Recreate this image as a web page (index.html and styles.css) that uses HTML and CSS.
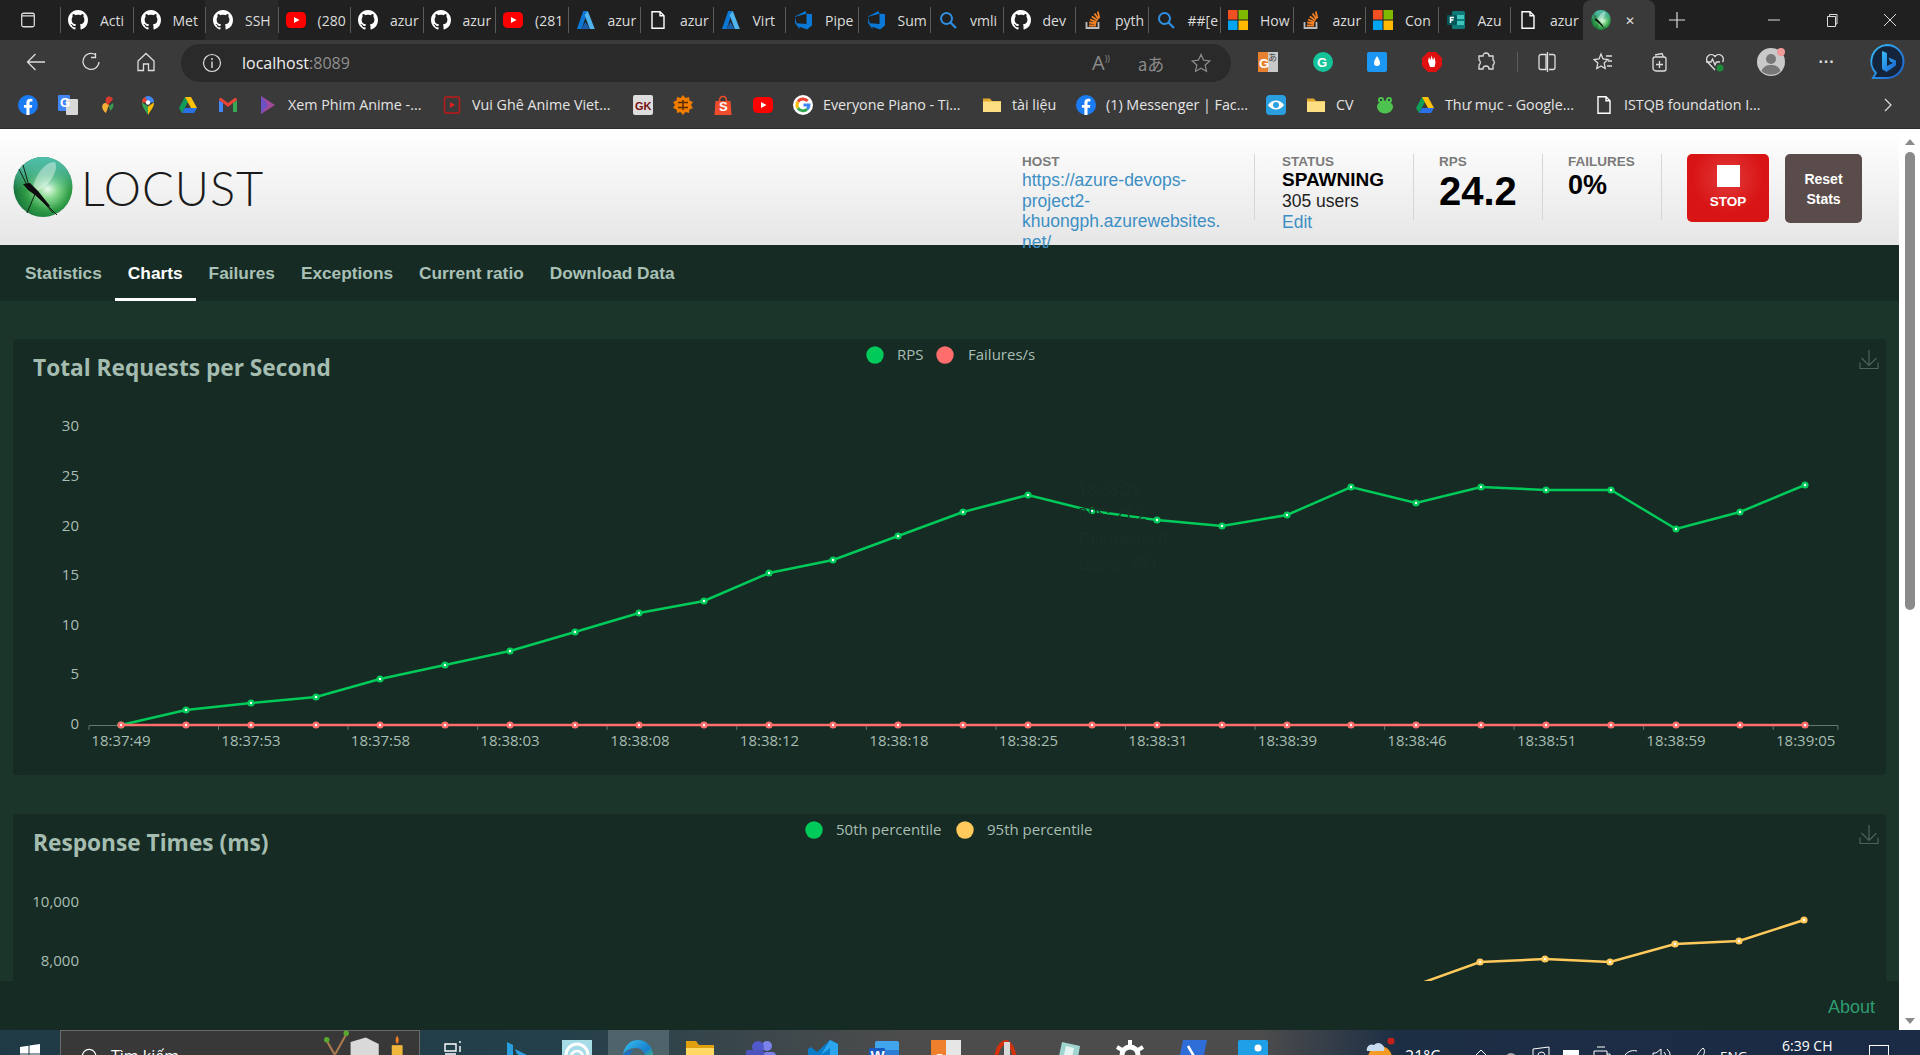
FILE: index.html
```html
<!DOCTYPE html>
<html lang="en">
<head>
    <meta charset="UTF-8">
    <meta name="viewport" content="width=device-width, initial-scale=1.0">
    <title>Locust</title>
    <link rel="stylesheet" href="styles.css">
</head>
<body>
    <!-- shared icons -->
    <svg class="sprite" xmlns="http://www.w3.org/2000/svg">
        <defs>
            <radialGradient id="orb" cx="58%" cy="52%" r="58%">
                <stop offset="0" stop-color="#f4fff4"/>
                <stop offset="0.3" stop-color="#86d88f"/>
                <stop offset="0.65" stop-color="#2f9c46"/>
                <stop offset="1" stop-color="#17713c"/>
            </radialGradient>
            <linearGradient id="orbtop" x1="0" y1="0" x2="0" y2="1">
                <stop offset="0" stop-color="#4fc0ad"/>
                <stop offset="0.22" stop-color="#4fb8a0" stop-opacity=".85"/>
                <stop offset="0.55" stop-color="#4fb8a0" stop-opacity="0"/>
            </linearGradient>
            <linearGradient id="edge" x1="0" y1="0" x2="1" y2="1">
                <stop offset="0" stop-color="#35c1f1"/>
                <stop offset="0.6" stop-color="#1b80cf"/>
                <stop offset="1" stop-color="#56d25a"/>
            </linearGradient>
            <linearGradient id="bingg" x1="0" y1="0" x2="1" y2="1">
                <stop offset="0" stop-color="#37bdf8"/>
                <stop offset="1" stop-color="#1a5fd0"/>
            </linearGradient>
        </defs>
        <symbol id="i-github" viewBox="0 0 16 16"><path fill="#fff" d="M8 0C3.58 0 0 3.58 0 8c0 3.54 2.29 6.53 5.47 7.59.4.07.55-.17.55-.38 0-.19-.01-.82-.01-1.49-2.01.37-2.53-.49-2.69-.94-.09-.23-.48-.94-.82-1.13-.28-.15-.68-.52-.01-.53.63-.01 1.08.58 1.23.82.72 1.21 1.87.87 2.33.66.07-.52.28-.87.51-1.07-1.78-.2-3.64-.89-3.64-3.95 0-.87.31-1.59.82-2.15-.08-.2-.36-1.02.08-2.12 0 0 .67-.21 2.2.82.64-.18 1.32-.27 2-.27.68 0 1.36.09 2 .27 1.53-1.04 2.2-.82 2.2-.82.44 1.1.16 1.92.08 2.12.51.56.82 1.27.82 2.15 0 3.07-1.87 3.75-3.65 3.95.29.25.54.73.54 1.48 0 1.07-.01 1.93-.01 2.2 0 .21.15.46.55.38A8.013 8.013 0 0016 8c0-4.42-3.58-8-8-8z"/></symbol>
        <symbol id="i-yt" viewBox="0 0 20 20"><rect y="2" width="20" height="16" rx="4.5" fill="#f00"/><path fill="#fff" d="M8 7l5.5 3L8 13z"/></symbol>
        <symbol id="i-azure" viewBox="0 0 20 20"><path fill="#0a78d4" d="M7.2 1h4.6L5.6 19H1z"/><path fill="#50b4ee" d="M11.8 1l7 18h-5L8.6 5z"/><path fill="#1a5fa8" d="M9.6 12l4.2 7H5.6l2.2-4.4z"/></symbol>
        <symbol id="i-doc" viewBox="0 0 20 20"><path fill="none" stroke="#fff" stroke-width="1.4" d="M4 1.7h8l4 4v12.6H4zM12 1.7v4h4"/></symbol>
        <symbol id="i-devops" viewBox="0 0 20 20"><path fill="#0a78d4" d="M19 4v11.5L14 19.5l-7.5-2.8V19L2 13l11.5.9V3.8zM2 7l1.6 6L2 13V6.5L12.5 1l1 2.8L5 6z"/></symbol>
        <symbol id="i-search" viewBox="0 0 20 20"><circle cx="8.5" cy="8.5" r="5.5" fill="none" stroke="#2f8fe0" stroke-width="2"/><path stroke="#2f8fe0" stroke-width="2.2" d="M12.5 12.5L18 18"/></symbol>
        <symbol id="i-so" viewBox="0 0 20 20"><path fill="none" stroke="#bcbbbb" stroke-width="1.8" d="M3.5 12v6h12v-6"/><path fill="none" stroke="#f48024" stroke-width="1.8" d="M6 15.5h7M6.2 12.5l7 1M7 9.5l6.6 2.6M8.8 6.4l5.8 4M11.5 3.5l4 5.6M14.8 1.5l1.5 6.7"/></symbol>
        <symbol id="i-ms" viewBox="0 0 20 20"><path fill="#f25022" d="M0 0h9.5v9.5H0z"/><path fill="#7fba00" d="M10.5 0H20v9.5h-9.5z"/><path fill="#00a4ef" d="M0 10.5h9.5V20H0z"/><path fill="#ffb900" d="M10.5 10.5H20V20h-9.5z"/></symbol>
        <symbol id="i-forms" viewBox="0 0 20 20"><rect x="6" y="1" width="13" height="18" rx="1.5" fill="#0f7b78"/><rect x="11" y="5" width="7" height="4" fill="#3fc6bd"/><rect x="11" y="11" width="7" height="4" fill="#3fc6bd"/><rect x="1" y="5" width="10" height="10" rx="1" fill="#05585a"/><path fill="none" stroke="#fff" stroke-width="1.5" d="M4.5 13V7.5h3.5M4.5 10h3"/></symbol>
        <symbol id="i-folder" viewBox="0 0 20 20"><path fill="#e0a92e" d="M1 3.5h7l2 2.5h9v11H1z"/><path fill="#fbdf82" d="M1 6.5h18V17H1z"/></symbol>
        <symbol id="i-fb" viewBox="0 0 20 20"><circle cx="10" cy="10" r="10" fill="#1b7bf2"/><path fill="#fff" d="M13.8 12.8l.5-2.9h-2.8V8c0-.8.4-1.5 1.6-1.5h1.3V4c-.7-.1-1.5-.2-2.2-.2-2.3 0-3.8 1.4-3.8 3.9v2.2H5.9v2.9h2.5V20h3.1v-7.2z"/></symbol>
        <symbol id="i-drive" viewBox="0 0 20 20"><path fill="#0f9d58" d="M7 2L1 13l3 5 6-11z"/><path fill="#ffc107" d="M7 2h6l6 11h-6z"/><path fill="#2a71e8" d="M19 13l-3 5H4l3-5z"/></symbol>
        <symbol id="i-g" viewBox="0 0 20 20"><circle cx="10" cy="10" r="10" fill="#fff"/><path fill="none" stroke-width="3" stroke="#ea4335" d="M14.6 6A6 6 0 0 0 5 6.8"/><path fill="none" stroke-width="3" stroke="#fbbc05" d="M5 6.8a6 6 0 0 0 0 6.4"/><path fill="none" stroke-width="3" stroke="#34a853" d="M5 13.2A6 6 0 0 0 14.3 14"/><path fill="none" stroke-width="3" stroke="#4285f4" d="M14.3 14A6 6 0 0 0 16 10h-5.5"/></symbol>
        <symbol id="i-orb" viewBox="0 0 60 60">
            <ellipse cx="30" cy="30" rx="29.5" ry="30" fill="url(#orb)"/>
            <ellipse cx="30" cy="30" rx="29.5" ry="30" fill="url(#orbtop)"/>
            <path fill="#fff" fill-opacity=".4" d="M20 30C24 14 34 4 42 5c4 7-4 23-18 29z"/>
            <path fill="#0e0e0e" d="M10 27l7-1 8 8 12 15-2 1-13-12-7-5z"/>
            <path fill="none" stroke="#0e0e0e" stroke-width=".9" d="M16 29L10 8M14 28L6 12M22 37L14 56M28 42L40 56M30 44L44 58"/>
        </symbol>
        <symbol id="i-down" viewBox="0 0 20 20"><path fill="none" stroke="#4f6259" stroke-width="1.2" d="M10 1v15.5M2.5 9l7.5 7.5L17.5 9M1 13.5v6h18v-6"/></symbol>
    </svg>

    <!-- browser tabs -->
    <div class="tabstrip">
        <div class="sidetab"><svg class="ic18" viewBox="0 0 20 20"><path fill="none" stroke="#ddd" stroke-width="1.4" d="M5 2.5h10a2 2 0 0 1 2 2v11a2 2 0 0 1-2 2H5a2 2 0 0 1-2-2v-11a2 2 0 0 1 2-2zM3 5.5h14"/></svg></div>
        <div class="tab"><svg class="fav"><use href="#i-github"/></svg><span>Acti</span></div>
        <div class="tab"><svg class="fav"><use href="#i-github"/></svg><span>Met</span></div>
        <div class="tab tab-hover"><svg class="fav"><use href="#i-github"/></svg><span>SSH</span></div>
        <div class="tab"><svg class="fav"><use href="#i-yt"/></svg><span>(280</span></div>
        <div class="tab"><svg class="fav"><use href="#i-github"/></svg><span>azur</span></div>
        <div class="tab"><svg class="fav"><use href="#i-github"/></svg><span>azur</span></div>
        <div class="tab"><svg class="fav"><use href="#i-yt"/></svg><span>(281</span></div>
        <div class="tab"><svg class="fav"><use href="#i-azure"/></svg><span>azur</span></div>
        <div class="tab"><svg class="fav"><use href="#i-doc"/></svg><span>azur</span></div>
        <div class="tab"><svg class="fav"><use href="#i-azure"/></svg><span>Virt</span></div>
        <div class="tab"><svg class="fav"><use href="#i-devops"/></svg><span>Pipe</span></div>
        <div class="tab"><svg class="fav"><use href="#i-devops"/></svg><span>Sum</span></div>
        <div class="tab"><svg class="fav"><use href="#i-search"/></svg><span>vmli</span></div>
        <div class="tab"><svg class="fav"><use href="#i-github"/></svg><span>dev</span></div>
        <div class="tab"><svg class="fav"><use href="#i-so"/></svg><span>pyth</span></div>
        <div class="tab"><svg class="fav"><use href="#i-search"/></svg><span>##[e</span></div>
        <div class="tab"><svg class="fav"><use href="#i-ms"/></svg><span>How</span></div>
        <div class="tab"><svg class="fav"><use href="#i-so"/></svg><span>azur</span></div>
        <div class="tab"><svg class="fav"><use href="#i-ms"/></svg><span>Con</span></div>
        <div class="tab"><svg class="fav"><use href="#i-forms"/></svg><span>Azu</span></div>
        <div class="tab"><svg class="fav"><use href="#i-doc"/></svg><span>azur</span></div>
        <div class="tab tab-active"><svg class="fav"><use href="#i-orb"/></svg><span class="tab-x">✕</span></div>
        <div class="newtab">
            <svg class="ic18" viewBox="0 0 20 20"><path stroke="#ddd" stroke-width="1.3" d="M10 1v18M1 10h18"/></svg>
        </div>
        <div class="winctl">
            <svg class="ic14" viewBox="0 0 14 14"><path stroke="#ddd" d="M1 7h12"/></svg>
            <svg class="ic14" viewBox="0 0 14 14"><path fill="none" stroke="#ddd" d="M2.5 3.500h8v10h-8zM4.500 3.500v-2h7.500v9.500h-1.500"/></svg>
            <svg class="ic14" viewBox="0 0 14 14"><path stroke="#ddd" d="M1 1l12 12M13 1L1 13"/></svg>
        </div>
    </div>

    <!-- browser toolbar -->
    <div class="toolbar">
        <div class="tool"><svg class="ic20" viewBox="0 0 20 20"><path fill="none" stroke="#ddd" stroke-width="1.3" d="M19 10H1.500M9.500 2L1.500 10l8 8"/></svg></div>
        <div class="tool"><svg class="ic20" viewBox="0 0 20 20"><path fill="none" stroke="#ddd" stroke-width="1.3" d="M14.500 2.800A8 8 0 1 0 18 10M14.500 1v4.500H10"/></svg></div>
        <div class="tool"><svg class="ic20" viewBox="0 0 20 20"><path fill="none" stroke="#ddd" stroke-width="1.3" d="M2 9l8-7.500L18 9v9.500h-5.500V12h-5v6.500H2z"/></svg></div>
        <div class="address">
            <svg class="ic20 addr-info" viewBox="0 0 20 20"><circle cx="10" cy="10" r="8.5" fill="none" stroke="#ddd" stroke-width="1.2"/><path stroke="#ddd" stroke-width="1.4" d="M10 8.500V15M10 5v2"/></svg>
            <span class="addr-host">localhost</span><span class="addr-port">:8089</span>
            <div class="addr-actions">
                <span class="addr-btn addr-read">A<sup>))</sup></span>
                <span class="addr-btn addr-trans">aあ</span>
                <span class="addr-btn"><svg class="ic20" viewBox="0 0 20 20"><path fill="none" stroke="#8a8a8a" stroke-width="1.3" d="M10 1.500l2.600 5.700 6.200.7-4.600 4.200 1.300 6.100L10 15.200l-5.500 3 1.300-6.100L1.200 7.900l6.200-.7z"/></svg></span>
            </div>
        </div>
        <div class="ext ext-first"><svg class="ic20" viewBox="0 0 20 20"><rect width="11" height="20" fill="#e8812f"/><rect x="10" width="10" height="20" fill="#c9c9c9"/><text class="ext-g" x="1" y="16">G</text><text class="ext-kana" x="10" y="9">あ</text></svg></div>
        <div class="ext"><svg class="ic20" viewBox="0 0 20 20"><circle cx="10" cy="10" r="10" fill="#15c39a"/><text class="ext-g" x="4" y="15">G</text></svg></div>
        <div class="ext"><svg class="ic20" viewBox="0 0 20 20"><rect width="20" height="20" rx="2" fill="#1c96f3"/><path fill="#fff" d="M10 4c2 3.500 3 5 3 7a3 3 0 0 1-6 0c0-2 1-3.500 3-7z"/></svg></div>
        <div class="ext"><svg class="ic20" viewBox="0 0 20 20"><path fill="#e01010" d="M6 0h8l6 6v8l-6 6H6l-6-6V6z"/><path fill="#fff" d="M6 9l1-4 1.500 3L9.500 3.500 11 8l1.500-3 1 5.500-1 4.500H8z"/></svg></div>
        <div class="ext"><svg class="ic20" viewBox="0 0 20 20"><path fill="none" stroke="#ddd" stroke-width="1.3" d="M7 4a3 3 0 0 1 6 0h4v4a3 3 0 0 1 0 5v4h-4a3 3 0 0 0-6 0H3v-4a3 3 0 0 0 0-5V4z"/></svg></div>
        <div class="tool-sep"></div>
        <div class="hub"><svg class="ic20" viewBox="0 0 20 20"><path fill="none" stroke="#ddd" stroke-width="1.3" d="M9 2.500H4a2 2 0 0 0-2 2v11a2 2 0 0 0 2 2h5zM12 2.500h4a2 2 0 0 1 2 2v11a2 2 0 0 1-2 2h-4M10.500 0v20"/></svg></div>
        <div class="hub"><svg class="ic20" viewBox="0 0 20 20"><path fill="none" stroke="#ddd" stroke-width="1.3" d="M8 2l2 5 5 .5-3.800 3.500 1 5.500L8 14l-4.200 2.500 1-5.500L1 7.500 6 7zM13 4h6M15 9h4M14 14h5"/></svg></div>
        <div class="hub"><svg class="ic20" viewBox="0 0 20 20"><path fill="none" stroke="#ddd" stroke-width="1.3" d="M6 3l7-1.500L14.500 5M4 6.500A2 2 0 0 1 6 5h9a2 2 0 0 1 2 2v10a2 2 0 0 1-2 2H7a3 3 0 0 1-3-3zM10.500 9v7M7 12.500h7"/></svg></div>
        <div class="hub"><svg class="ic20" viewBox="0 0 20 20"><path fill="none" stroke="#ddd" stroke-width="1.3" d="M10 18L2.500 10a4.500 4.500 0 0 1 7.500-5.500A4.500 4.500 0 0 1 17.500 10M1 10h5l1.500-3 2.500 6 1.500-3H15"/><circle cx="15" cy="16" r="3.5" fill="#1f8a3b"/></svg></div>
        <div class="hub"><svg class="ic28" viewBox="0 0 28 28"><circle cx="14" cy="14" r="14" fill="#c9c9c9"/><circle cx="14" cy="11" r="5" fill="#777"/><path fill="#777" d="M4.500 23c2-5 5.500-6 9.500-6s7.500 1 9.500 6a14 14 0 0 1-19 0z"/><circle cx="24" cy="4" r="4" fill="#f29a9a"/></svg></div>
        <div class="hub hub-more">···</div>
        <div class="bing"><svg class="ic38" viewBox="0 0 38 38"><path fill="#14243a" stroke="url(#bingg)" stroke-width="2" d="M19 2a16.500 16.500 0 0 1 0 33H5l3-5A16.500 16.500 0 0 1 19 2z"/><path fill="url(#bingg)" d="M14 8l5 2v13l6-3-3-1.500-1.500-4L28 17.500v5L18.500 29 14 26z"/></svg></div>
    </div>

    <!-- bookmarks -->
    <div class="bookmarks">
        <div class="bm"><svg class="fav"><use href="#i-fb"/></svg></div>
        <div class="bm"><svg class="fav" viewBox="0 0 20 20"><rect width="12" height="16" rx="1" fill="#4285f4"/><rect x="8" y="4" width="12" height="16" rx="1" fill="#d8d8d8"/><text class="ext-g" x="2" y="12">G</text></svg></div>
        <div class="bm"><svg class="fav" viewBox="0 0 20 20"><path fill="#f2b134" d="M5 9a4 4 0 0 1 6 1l-3 8c-3-2-5-6-3-9z"/><path fill="#d83a2e" d="M9 2c3-1 5 0 6 2l-5 6C7 8 7 4 9 2z"/><path fill="#3b9a4c" d="M11 11l4-3c1 3 0 6-3 8z"/></svg></div>
        <div class="bm"><svg class="fav" viewBox="0 0 20 20"><path fill="#34a853" d="M10 20C7 15 4 12 4 7.500l6 4z"/><path fill="#fbbc05" d="M10 20c3-5 6-8 6-12.500l-6 4z"/><path fill="#4285f4" d="M16 7.500A6 6 0 0 0 7 2l3 5.500z"/><path fill="#ea4335" d="M7 2a6 6 0 0 0-3 5.500l6 0z"/><circle cx="10" cy="7.5" r="2.2" fill="#fff"/></svg></div>
        <div class="bm"><svg class="fav"><use href="#i-drive"/></svg></div>
        <div class="bm"><svg class="fav" viewBox="0 0 20 20"><path fill="#4285f4" d="M1 17V5l4 3v9z"/><path fill="#34a853" d="M19 17V5l-4 3v9z"/><path fill="#ea4335" d="M1 5c0-2 2-2.500 3-1.500L10 8l6-4.500c1-1 3-.5 3 1.500l-4 3-5 4-5-4z"/></svg></div>
        <div class="bm w184"><svg class="fav" viewBox="0 0 20 20"><path fill="#a2489d" d="M3 1l14 9-14 9z"/><path fill="#6b52c4" d="M3 1l7 9-7 9z"/></svg><span>Xem Phim Anime -...</span></div>
        <div class="bm w191"><svg class="fav" viewBox="0 0 20 20"><rect x="2.5" y="2" width="15" height="16" rx="2" fill="none" stroke="#c01818" stroke-width="1.5"/><path fill="#e02020" d="M8 7l5 3-5 3z"/></svg><span>Vui Ghê Anime Viet...</span></div>
        <div class="bm"><svg class="fav" viewBox="0 0 20 20"><rect width="20" height="20" rx="2" fill="#ddd"/><text class="gk-text" x="2" y="15">GK</text></svg></div>
        <div class="bm"><svg class="fav" viewBox="0 0 20 20"><path fill="#f07c00" d="M10 0l2.500 3 3.500-1 .5 3.500 3.500 1.500-2 3 2 3-3.500 1.500L16 18l-3.500-1L10 20l-2.500-3L4 18l-.5-3.500L0 13l2-3-2-3 3.500-1.500L4 2l3.500 1z"/><path stroke="#5a2c00" stroke-width="1.5" d="M5 7.500h10M5 12.500h10M10 5v10"/></svg></div>
        <div class="bm"><svg class="fav" viewBox="0 0 20 20"><path fill="#ee4d2d" d="M2.500 6h15l1 14h-17z"/><path fill="none" stroke="#ee4d2d" stroke-width="1.5" d="M6.500 6c0-6 7-6 7 0"/><text class="ext-g" x="6" y="16">S</text></svg></div>
        <div class="bm"><svg class="fav"><use href="#i-yt"/></svg></div>
        <div class="bm w189"><svg class="fav"><use href="#i-g"/></svg><span>Everyone Piano - Ti...</span></div>
        <div class="bm w94"><svg class="fav"><use href="#i-folder"/></svg><span>tài liệu</span></div>
        <div class="bm w190"><svg class="fav"><use href="#i-fb"/></svg><span>(1) Messenger | Fac...</span></div>
        <div class="bm"><svg class="fav" viewBox="0 0 20 20"><rect width="20" height="20" rx="4" fill="#2a9fe0"/><path fill="#fff" d="M2 10c4-6 12-6 16 0-4 6-12 6-16 0z"/><circle cx="10" cy="10" r="3" fill="#2a9fe0"/></svg></div>
        <div class="bm w69"><svg class="fav"><use href="#i-folder"/></svg><span>CV</span></div>
        <div class="bm"><svg class="fav" viewBox="0 0 20 20"><circle cx="6" cy="5" r="3" fill="#4fc34f"/><circle cx="14" cy="5" r="3" fill="#4fc34f"/><ellipse cx="10" cy="12" rx="8" ry="6.5" fill="#4fc34f"/><circle cx="6" cy="5" r="1" fill="#123"/><circle cx="14" cy="5" r="1" fill="#123"/></svg></div>
        <div class="bm w179"><svg class="fav"><use href="#i-drive"/></svg><span>Thư mục - Google...</span></div>
        <div class="bm w197"><svg class="fav"><use href="#i-doc"/></svg><span>ISTQB foundation I...</span></div>
        <div class="bm-more"><svg class="ic14" viewBox="0 0 14 14"><path fill="none" stroke="#ddd" stroke-width="1.2" d="M4 1l6 6-6 6"/></svg></div>
    </div>

    <!-- the locust page -->
    <div class="viewport">
        <div class="app">
            <header class="header">
                <svg class="logo"><use href="#i-orb"/></svg>
                <span class="wordmark">LOCUST</span>
                <div class="stats">
                    <div class="stat stat-host">
                        <div class="stat-label">HOST</div>
                        <a class="stat-link host-link" href="#">https://azure-devops-project2-khuongph.azurewebsites.<wbr>net/</a>
                    </div>
                    <div class="stat stat-status">
                        <div class="stat-label">STATUS</div>
                        <div class="status-name">SPAWNING</div>
                        <div class="status-users">305 users</div>
                        <a class="stat-link" href="#">Edit</a>
                    </div>
                    <div class="stat stat-rps">
                        <div class="stat-label">RPS</div>
                        <div class="rps-value">24.2</div>
                    </div>
                    <div class="stat stat-fail">
                        <div class="stat-label">FAILURES</div>
                        <div class="fail-value">0%</div>
                    </div>
                </div>
                <button class="btn btn-stop"><span class="stop-square"></span>STOP</button>
                <button class="btn btn-reset">Reset<br>Stats</button>
            </header>

            <nav class="nav">
                <a class="nav-item">Statistics</a>
                <a class="nav-item nav-active">Charts</a>
                <a class="nav-item">Failures</a>
                <a class="nav-item">Exceptions</a>
                <a class="nav-item">Current ratio</a>
                <a class="nav-item">Download Data</a>
            </nav>

            <main class="main">
                <section class="card">
                    <svg class="chart" viewBox="13 339 1873 436">
                        <defs>
                            <marker id="dot-green" viewBox="-4 -4 8 8" markerWidth="8" markerHeight="8" markerUnits="userSpaceOnUse"><circle r="3.6" fill="#00ca5a"/><circle r="1.2" fill="#fff"/></marker>
                            <marker id="dot-red" viewBox="-4 -4 8 8" markerWidth="8" markerHeight="8" markerUnits="userSpaceOnUse"><circle r="3.6" fill="#ff6d6d"/><circle r="1.2" fill="#fff"/></marker>
                        </defs>
                        <text class="chart-title" x="33" y="376">Total Requests per Second</text>
                        <circle cx="875" cy="355" r="8.7" fill="#00ca5a"/>
                        <text class="chart-legend" x="897" y="360">RPS</text>
                        <circle cx="945" cy="355" r="8.7" fill="#ff6d6d"/>
                        <text class="chart-legend" x="968" y="360">Failures/s</text>
                        <use href="#i-down" x="1859" y="349" width="20" height="20"/>

                        <g class="axis-y">
                            <text x="79" y="431">30</text>
                            <text x="79" y="481">25</text>
                            <text x="79" y="531">20</text>
                            <text x="79" y="580">15</text>
                            <text x="79" y="630">10</text>
                            <text x="79" y="679">5</text>
                            <text x="79" y="729">0</text>
                        </g>
                        <path class="axis-line" d="M89 730V725.5H1838V730M218.5 725.5V730M348 725.5V730M477.7 725.5V730M607 725.5V730M736.8 725.5V730M866.3 725.5V730M995.9 725.5V730M1125.4 725.5V730M1255 725.5V730M1384.6 725.5V730M1514 725.5V730M1643.7 725.5V730M1773.2 725.5V730"/>
                        <g class="axis-x">
                            <text x="121" y="746">18:37:49</text>
                            <text x="251" y="746">18:37:53</text>
                            <text x="380.5" y="746">18:37:58</text>
                            <text x="510" y="746">18:38:03</text>
                            <text x="640" y="746">18:38:08</text>
                            <text x="769.5" y="746">18:38:12</text>
                            <text x="899" y="746">18:38:18</text>
                            <text x="1028.5" y="746">18:38:25</text>
                            <text x="1158" y="746">18:38:31</text>
                            <text x="1287.5" y="746">18:38:39</text>
                            <text x="1417" y="746">18:38:46</text>
                            <text x="1546.6" y="746">18:38:51</text>
                            <text x="1676" y="746">18:38:59</text>
                            <text x="1805.7" y="746">18:39:05</text>
                        </g>

                        <polyline class="series series-green" points="121,725 186,710 251,703 316,697 380,679 445,665 510,651 575,632 639,613 704,601 769,573 833,560 898,536 963,512 1028,495 1092,511 1157,520 1222,526 1287,515 1351,487 1416,503 1481,487 1546,490 1611,490 1676,529 1740,512 1805,485"/>
                        <polyline class="series series-red" points="121,725 186,725 251,725 316,725 380,725 445,725 510,725 575,725 639,725 704,725 769,725 833,725 898,725 963,725 1028,725 1092,725 1157,725 1222,725 1287,725 1351,725 1416,725 1481,725 1546,725 1611,725 1676,725 1740,725 1805,725"/>

                        <!-- tooltip fading out -->
                        <g class="ghost-tip">
                            <text x="1078" y="495">18:38:25</text>
                            <text x="1078" y="520">RPS: 21.2</text>
                            <text x="1078" y="545">Failures/s: 0</text>
                            <text x="1078" y="570">Users: 190</text>
                        </g>
                    </svg>
                </section>

                <section class="card">
                    <svg class="chart" viewBox="13 814 1873 436">
                        <defs>
                            <marker id="dot-yellow" viewBox="-4 -4 8 8" markerWidth="8" markerHeight="8" markerUnits="userSpaceOnUse"><circle r="3.6" fill="#ffc95c"/><circle r="1.2" fill="#fff"/></marker>
                        </defs>
                        <text class="chart-title" x="33" y="851">Response Times (ms)</text>
                        <circle cx="814" cy="830" r="8.7" fill="#00ca5a"/>
                        <text class="chart-legend" x="836" y="835">50th percentile</text>
                        <circle cx="965" cy="830" r="8.7" fill="#ffc95c"/>
                        <text class="chart-legend" x="987" y="835">95th percentile</text>
                        <use href="#i-down" x="1859" y="824" width="20" height="20"/>
                        <g class="axis-y">
                            <text x="79" y="907">10,000</text>
                            <text x="79" y="966">8,000</text>
                        </g>
                        <polyline class="series series-yellow" points="1351,1030 1416,985 1480,962 1545,959 1610,962 1675,944 1739,941 1804,920"/>
                    </svg>
                </section>
            </main>

            <footer class="footer"><a class="about">About</a></footer>
        </div>

        <div class="scrollbar">
            <span class="arrow-up"></span>
            <span class="thumb"></span>
            <span class="arrow-down"></span>
        </div>
    </div>

    <!-- windows taskbar, cut by the bottom of the capture -->
    <div class="taskbar">
        <div class="start"><svg class="ic20" viewBox="0 0 20 20"><path fill="#fff" d="M0 3l8.500-1.200V9.500H0zM9.500 1.600L20 0v9.500H9.500zM0 10.500h8.500v7.700L0 17zM9.500 10.500H20V20L9.500 18.400z"/></svg></div>
        <div class="search">
            <svg class="search-ic" viewBox="0 0 20 20"><circle cx="9" cy="9" r="7.5" fill="none" stroke="#fff" stroke-width="1.4"/></svg>
            <span>Tìm kiếm</span>
            <svg class="search-art" viewBox="0 0 90 24"><path fill="none" stroke="#a9784e" stroke-width="2" d="M14 24L6 10M14 22L24 4"/><circle cx="6" cy="9" r="2.5" fill="#58a82e"/><circle cx="24" cy="3" r="2.5" fill="#58a82e"/><path fill="#d9d9d9" d="M28 24V11l14-4 12 6v11z"/><path fill="#f1b73c" d="M66 24V14h10v10z"/><path fill="#f27c20" d="M71 5c2 3 2 6 0 8-2-2-2-5 0-8z"/></svg>
        </div>
        <div class="task"><svg class="ic20" viewBox="0 0 20 20"><path fill="none" stroke="#fff" stroke-width="1.4" d="M1 4h11v7H1zM1 14h11M16 1v2M16 6v6"/></svg></div>
        <div class="task"><svg class="ic28" viewBox="0 0 28 28"><path fill="#2a9fe0" d="M6 2l6 3v16l8-5-4-2-2-5 12 6v5l-14 8-6-4z"/></svg></div>
        <div class="task"><svg class="ic30" viewBox="0 0 30 30"><rect width="30" height="30" fill="#a6dce6"/><circle cx="15" cy="15" r="11" fill="none" stroke="#fff" stroke-width="3"/><circle cx="15" cy="17" r="6" fill="none" stroke="#fff" stroke-width="2.5"/></svg></div>
        <div class="task task-active"><svg class="ic30" viewBox="0 0 30 30"><path fill="url(#edge)" d="M15 0a15 15 0 0 1 15 15c0 5-4 8-8 8-3 0-5-1-6-3 3 0 6-1 6-4 0-4-4-8-9-8C7 8 2 11 0 15 1 6 7 0 15 0z"/><path fill="#1b70c4" d="M0 15c2-3 6-5 11-5-5 3-6 9-3 14 1 2 3 4 5 5C6 29 0 23 0 15z"/></svg></div>
        <div class="task"><svg class="ic30" viewBox="0 0 30 30"><path fill="#e0a010" d="M1 1h10l3 4h15v25H1z"/><path fill="#ffd964" d="M1 8h28v22H1z"/></svg></div>
        <div class="task"><svg class="ic30" viewBox="0 0 30 30"><circle cx="21" cy="6" r="5" fill="#7b83eb"/><rect x="17" y="12" width="13" height="18" rx="4" fill="#7b83eb"/><circle cx="12" cy="7" r="6" fill="#5059c9"/><rect x="0" y="10" width="18" height="20" rx="2" fill="#4b53bc"/><text class="task-letter" x="4" y="25">T</text></svg></div>
        <div class="task"><svg class="ic30" viewBox="0 0 30 30"><path fill="#0a7cc8" d="M22 0l8 4v22l-8 4-13-12-6 5-3-2V9l3-2 6 5z"/><path fill="#2aa5ee" d="M22 0l8 4v22l-8 4V8l-9 7z"/></svg></div>
        <div class="task"><svg class="ic30" viewBox="0 0 30 30"><rect x="6" y="1" width="24" height="28" rx="2" fill="#41a5ee"/><rect x="6" y="10" width="24" height="10" fill="#2b7cd3"/><rect x="0" y="8" width="16" height="16" rx="1" fill="#185abd"/><text class="task-letter" x="1.5" y="21">W</text></svg></div>
        <div class="task"><svg class="ic30" viewBox="0 0 30 30"><rect width="15" height="30" fill="#ee7f2d"/><rect x="15" width="15" height="30" fill="#e6e6e6"/><text class="task-letter" x="3" y="24">G</text></svg></div>
        <div class="task"><svg class="ic30" viewBox="0 0 30 30"><path fill="none" stroke="#d4320c" stroke-width="4" d="M6 28C2 16 6 4 14 2c6 2 10 12 8 26"/><rect x="12" y="2" width="6" height="24" fill="#d9d9d9"/></svg></div>
        <div class="task"><svg class="ic30" viewBox="0 0 30 30"><path fill="#9fd4cf" d="M8 2l18 4-4 24H2z"/><path fill="#e6f4f2" d="M12 6l8 2-4 20H7z"/></svg></div>
        <div class="task"><svg class="ic30" viewBox="0 0 30 30"><circle cx="15" cy="15" r="8" fill="none" stroke="#fff" stroke-width="5"/><path stroke="#fff" stroke-width="4" d="M15 0v6M15 24v6M2 7l5 3M28 7l-5 3M2 23l5-3M28 23l-5-3"/></svg></div>
        <div class="task"><svg class="ic30" viewBox="0 0 30 30"><path fill="#2f6ed8" d="M6 0h24l-6 30H0z"/><path stroke="#fff" stroke-width="2.5" d="M11 6l7 12"/></svg></div>
        <div class="task"><svg class="ic30" viewBox="0 0 30 30"><rect width="30" height="30" rx="2" fill="#1e9fe6"/><circle cx="20" cy="8" r="3.5" fill="#fff"/><path fill="#0a4f8a" d="M0 30l10-13 8 9 3-3 9 7z"/></svg></div>
        <div class="tray">
            <svg class="tray-weather" viewBox="0 0 30 30"><circle cx="14" cy="20" r="12" fill="#f59b23"/><path fill="#c7dcef" d="M1 13a5 5 0 0 1 7-6 6 6 0 0 1 10 6z"/><circle cx="25" cy="3" r="3.5" fill="#c5211a"/></svg>
            <span class="tray-temp">21°C</span>
            <span class="tray-ic"><svg class="ic14" viewBox="0 0 14 14"><path fill="none" stroke="#fff" d="M2 9l5-5 5 5"/></svg></span>
            <span class="tray-ic"><svg class="ic20" viewBox="0 0 20 20"><path fill="#aaa" d="M3 18a4 4 0 0 1 2-8 6 6 0 0 1 11 2 3 3 0 0 1 0 6z"/></svg></span>
            <span class="tray-ic"><svg class="ic20" viewBox="0 0 20 20"><path fill="none" stroke="#fff" d="M2 3l16-2v18H2zM7 10a3.5 3.5 0 1 1 4 3"/></svg></span>
            <span class="tray-ic"><svg class="ic20" viewBox="0 0 20 20"><rect x="2" y="4" width="16" height="12" fill="#fff"/></svg></span>
            <span class="tray-ic"><svg class="ic20" viewBox="0 0 20 20"><path fill="none" stroke="#fff" d="M6 1h8M3 5h13v13H3zM16 8l3 0v6h-3"/></svg></span>
            <span class="tray-ic"><svg class="ic20" viewBox="0 0 20 20"><path fill="none" stroke="#fff" d="M2 14a11 11 0 0 1 14-9M5 17a7 7 0 0 1 9-7"/></svg></span>
            <span class="tray-ic"><svg class="ic20" viewBox="0 0 20 20"><path fill="none" stroke="#fff" d="M2 7h3l5-4v14l-5-4H2zM13 6a6 6 0 0 1 0 8M16 3a9 9 0 0 1 0 14"/></svg></span>
            <span class="tray-pen"><svg class="ic20" viewBox="0 0 20 20"><path fill="none" stroke="#fff" d="M5 18c-2-4 2-12 7-16 3 2 1 8-3 13zM13 14c2 0 3 2 4 4"/></svg></span>
            <span class="tray-lang">ENG</span>
            <span class="tray-clock">6:39 CH</span>
            <span class="tray-note"></span>
        </div>
    </div>
</body>
</html>
```

FILE: styles.css
```css
html, body {
    margin: 0;
    height: 100%;
    overflow: hidden;
}
body {
    width: 1920px;
    height: 1055px;
    display: flex;
    flex-direction: column;
    font-family: 'Liberation Sans', Arial, sans-serif;
    background: #3a3a3a;
}
.sprite {
    width: 0;
    height: 0;
    position: absolute;
}
.ic14 { width: 14px; height: 14px; }
.ic18 { width: 18px; height: 18px; }
.ic20 { width: 20px; height: 20px; }
.ic28 { width: 28px; height: 28px; }
.ic30 { width: 30px; height: 30px; }
.ic38 { width: 38px; height: 38px; }
.fav {
    width: 20px;
    height: 20px;
    flex: none;
}

/* browser chrome */
.tabstrip {
    height: 40px;
    flex: none;
    display: flex;
    align-items: stretch;
    background: #202020;
    color: #ddd;
    font: 14px 'Open Sans', sans-serif;
}
.sidetab {
    width: 60px;
    flex: none;
    display: flex;
    align-items: center;
    justify-content: center;
    padding-right: 4px;
    box-sizing: border-box;
}
.tab {
    width: 72.5px;
    flex: none;
    box-sizing: border-box;
    display: flex;
    align-items: center;
    gap: 12px;
    padding-left: 8px;
    overflow: hidden;
    white-space: nowrap;
    background-image: linear-gradient(#5c5c5c, #5c5c5c);
    background-size: 1px 26px;
    background-position: left center;
    background-repeat: no-repeat;
}
.tab-hover {
    background-color: #292929;
}
.tab-active {
    background: #3a3a3a;
    border-radius: 8px 8px 0 0;
    gap: 14px;
}
.tab-x {
    font-size: 12px;
}
.newtab {
    width: 44px;
    display: flex;
    align-items: center;
    justify-content: center;
}
.winctl {
    margin-left: auto;
    display: flex;
    align-items: center;
    gap: 44px;
    padding-right: 23px;
}
.toolbar {
    height: 44px;
    flex: none;
    display: flex;
    align-items: center;
    padding-left: 8px;
    background: #3a3a3a;
}
.tool {
    width: 55px;
    flex: none;
    display: flex;
    justify-content: center;
}
.address {
    width: 1050px;
    height: 38px;
    margin-left: 8px;
    margin-top: 2px;
    flex: none;
    box-sizing: border-box;
    padding-left: 21px;
    display: flex;
    align-items: center;
    background: #2a2a2a;
    border-radius: 19px;
    font: 16px 'Open Sans', sans-serif;
}
.addr-info {
    margin-right: 20px;
}
.addr-host {
    color: #f0f0f0;
}
.addr-port {
    color: #8f8f8f;
}
.addr-actions {
    margin-left: auto;
    padding-right: 5px;
    display: flex;
}
.addr-btn {
    width: 50px;
    display: flex;
    justify-content: center;
    align-items: center;
    color: #8a8a8a;
}
.addr-read {
    font-size: 20px;
    line-height: 24px;
}
.addr-read sup {
    font-size: 9px;
    margin-top: -8px;
}
.addr-trans {
    font: 17px 'Noto Sans CJK JP', 'Open Sans', sans-serif;
}
.ext {
    width: 54.5px;
    flex: none;
    display: flex;
    justify-content: center;
}
.ext-first {
    margin-left: 10px;
}
.ext-g {
    font: bold 13px 'Liberation Sans', sans-serif;
    fill: #fff;
}
.ext-kana {
    font: 9px 'Noto Sans CJK JP', sans-serif;
    fill: #444;
}
.tool-sep {
    width: 1px;
    height: 20px;
    margin: 0 1px 0 3px;
    background: #5c5c5c;
}
.hub {
    width: 56px;
    flex: none;
    display: flex;
    justify-content: center;
    align-items: center;
    color: #ddd;
}
.hub-more {
    font-weight: bold;
    font-size: 16px;
}
.bing {
    margin-left: 13px;
    display: flex;
}
.bookmarks {
    height: 45px;
    flex: none;
    box-sizing: border-box;
    padding: 0 0 3px 8px;
    display: flex;
    align-items: center;
    background: #3a3a3a;
    border-bottom: 1px solid #2c2c2c;
    color: #e4e4e4;
    font: 14.3px 'Open Sans', sans-serif;
    white-space: nowrap;
}
.bm {
    width: 40px;
    flex: none;
    display: flex;
    align-items: center;
    padding-left: 10px;
    box-sizing: border-box;
    gap: 10px;
}
.w69 { width: 69px; }
.w94 { width: 94px; }
.w179 { width: 179px; }
.w184 { width: 184px; }
.w189 { width: 189px; }
.w190 { width: 190px; }
.w191 { width: 191px; }
.w197 { width: 197px; }
.gk-text {
    font: bold 11px 'Liberation Sans', sans-serif;
    fill: #7a1010;
}
.bm-more {
    margin-left: auto;
    padding-right: 25px;
    display: flex;
}

/* page */
.viewport {
    flex: none;
    height: 901px;
    display: flex;
}
.app {
    width: 1899px;
    flex: none;
    display: flex;
    flex-direction: column;
    background: #1b352b;
}
.header {
    height: 116px;
    flex: none;
    box-sizing: border-box;
    padding: 25px 37px 0 13px;
    display: flex;
    align-items: flex-start;
    position: relative;
    z-index: 2;
    background: linear-gradient(#fff, #e6e6e6);
}
.logo {
    width: 60px;
    height: 60px;
    margin-top: 3px;
    flex: none;
}
.wordmark {
    margin: 6px 0 0 8px;
    font: 300 47px/56px Lato, sans-serif;
    color: #1a1a1a;
    letter-spacing: 1px;
}
.stats {
    margin-left: auto;
    display: flex;
}
.stat {
    height: 66px;
    box-sizing: border-box;
    border-right: 1px solid #d6d6d6;
}
.stat-host {
    width: 233px;
}
.stat-status {
    width: 159px;
    padding-left: 27px;
}
.stat-rps {
    width: 129px;
    padding-left: 25px;
}
.stat-fail {
    width: 119px;
    padding-left: 25px;
}
.stat-label {
    height: 15px;
    font-size: 13.5px;
    font-weight: bold;
    line-height: 15px;
    color: #7b7b7b;
}
.stat-link {
    display: block;
    width: 205px;
    font-size: 17.5px;
    line-height: 20.6px;
    color: #3d8fc4;
    text-decoration: none;
}
.host-link {
    margin-top: 1px;
}
.status-name {
    font-size: 19px;
    font-weight: bold;
    line-height: 22px;
    color: #000;
}
.status-users {
    font-size: 17.5px;
    line-height: 21px;
    color: #222;
}
.rps-value {
    font-size: 40px;
    font-weight: bold;
    line-height: 44px;
    color: #000;
}
.fail-value {
    font-size: 27px;
    font-weight: bold;
    line-height: 32px;
    color: #000;
}
.btn {
    flex: none;
    border: none;
    padding: 0;
    color: #fff;
    font: bold 14px/20px 'Liberation Sans', sans-serif;
    cursor: pointer;
}
.btn-stop {
    width: 82px;
    height: 68px;
    margin-left: 25px;
    border-radius: 5px;
    background: radial-gradient(circle at 50% 35%, #e23a3a, #d81414 60%);
    font-size: 13.5px;
}
.stop-square {
    display: block;
    width: 23px;
    height: 22px;
    margin: 0 auto 5px;
    background: #fff;
}
.btn-reset {
    width: 77px;
    height: 69px;
    margin-left: 16px;
    border-radius: 5px;
    background: #5a4c4b;
}
.nav {
    height: 56px;
    flex: none;
    box-sizing: border-box;
    padding-left: 12px;
    display: flex;
    background: #162b23;
}
.nav-item {
    padding: 0 13px;
    font-size: 17.3px;
    font-weight: bold;
    line-height: 56px;
    color: #a9c0b6;
    border-bottom: 3px solid transparent;
    height: 56px;
    box-sizing: border-box;
}
.nav-active {
    color: #fff;
    border-bottom-color: #fff;
}
.main {
    flex: 1;
    min-height: 0;
    overflow: hidden;
    box-sizing: border-box;
    padding: 38px 13px 0;
    display: flex;
    flex-direction: column;
    gap: 39px;
}
.card {
    flex: none;
    height: 436px;
    border-radius: 4px;
    background: #162b23;
}
.chart {
    display: block;
    width: 1873px;
    height: 436px;
    font-family: 'Open Sans', sans-serif;
}
.chart-title {
    font-size: 22.7px;
    font-weight: 700;
    fill: #a5bdb1;
}
.chart-legend {
    font-size: 15px;
    fill: #a8bdb3;
}
.axis-y text {
    font-size: 15px;
    fill: #a8bdb3;
    text-anchor: end;
}
.axis-x text {
    font-size: 15px;
    fill: #a8bdb3;
    text-anchor: middle;
}
.axis-line {
    fill: none;
    stroke: #66776f;
    stroke-width: 1;
}
.series {
    fill: none;
    stroke-width: 2.5;
}
.series-green {
    stroke: #00ca5a;
    marker-start: url(#dot-green);
    marker-mid: url(#dot-green);
    marker-end: url(#dot-green);
}
.series-red {
    stroke: #ff6d6d;
    marker-start: url(#dot-red);
    marker-mid: url(#dot-red);
    marker-end: url(#dot-red);
}
.series-yellow {
    stroke: #ffc95c;
    marker-start: url(#dot-yellow);
    marker-mid: url(#dot-yellow);
    marker-end: url(#dot-yellow);
}
.ghost-tip text {
    font-size: 16px;
    fill: #1a3027;
}
.footer {
    height: 49px;
    flex: none;
    box-sizing: border-box;
    padding: 3px 24px 0 0;
    display: flex;
    align-items: center;
    justify-content: flex-end;
    background: #162b23;
}
.about {
    font-size: 18px;
    color: #2f9c70;
}
.scrollbar {
    width: 21px;
    flex: none;
    display: flex;
    flex-direction: column;
    align-items: center;
    background: #fff;
}
.arrow-up {
    margin-top: 10px;
    border: 5px solid transparent;
    border-top: none;
    border-bottom: 6px solid #8a8a8a;
}
.thumb {
    width: 10px;
    height: 458px;
    margin-top: 7px;
    border-radius: 5px;
    background: #8a8a8a;
}
.arrow-down {
    margin-top: auto;
    margin-bottom: 6px;
    border: 5px solid transparent;
    border-bottom: none;
    border-top: 6px solid #8a8a8a;
}

/* taskbar */
.taskbar {
    height: 48px;
    flex: none;
    display: flex;
    align-items: flex-start;
    background: linear-gradient(to right, #1f3a44 0, #24404a 560px, #4c4c4c 900px, #4c4c4c 1260px, #1c2e44 1400px, #1b2a45 100%);
    color: #fff;
}
.start {
    width: 60px;
    flex: none;
    padding: 14px 0 0 20px;
    box-sizing: border-box;
}
.search {
    width: 360px;
    height: 48px;
    flex: none;
    box-sizing: border-box;
    padding: 14px 0 0 20px;
    display: flex;
    gap: 12px;
    background: #383838;
    border: 1px solid #6a6a6a;
    font: 16px 'Open Sans', sans-serif;
    margin-right: 3px;
}
.search-ic {
    width: 18px;
    height: 18px;
    flex: none;
    margin-top: 3px;
}
.search-art {
    width: 100px;
    height: 26px;
    margin-left: auto;
    margin-top: -15px;
    flex: none;
}
.task {
    width: 61.5px;
    height: 48px;
    flex: none;
    box-sizing: border-box;
    padding-top: 10px;
    display: flex;
    justify-content: center;
}
.task-active {
    background: #4e636a;
}
.task-letter {
    font: bold 15px 'Liberation Sans', sans-serif;
    fill: #fff;
}
.tray {
    margin-left: auto;
    padding-top: 8px;
    display: flex;
    align-items: flex-start;
    box-sizing: border-box;
    width: 554px;
    font: 15px 'Open Sans', sans-serif;
}
.tray-weather {
    width: 30px;
    height: 30px;
    margin-right: 9px;
    flex: none;
}
.tray-temp {
    width: 61px;
    flex: none;
    margin-top: 7px;
    font-size: 16px;
}
.tray-ic {
    width: 30px;
    flex: none;
    display: flex;
    justify-content: center;
    margin-top: 8px;
}
.tray-pen {
    width: 30px;
    margin-left: 10px;
    flex: none;
    display: flex;
    justify-content: center;
    margin-top: 8px;
}
.tray-lang {
    width: 62px;
    flex: none;
    margin: 9px 0 0 4px;
    font-size: 13.5px;
}
.tray-clock {
    width: 87px;
    flex: none;
    margin-top: -2px;
    font-size: 14px;
}
.tray-note {
    width: 20px;
    height: 30px;
    flex: none;
    box-sizing: border-box;
    margin-top: 7px;
    border: 1px solid #fff;
}
```
